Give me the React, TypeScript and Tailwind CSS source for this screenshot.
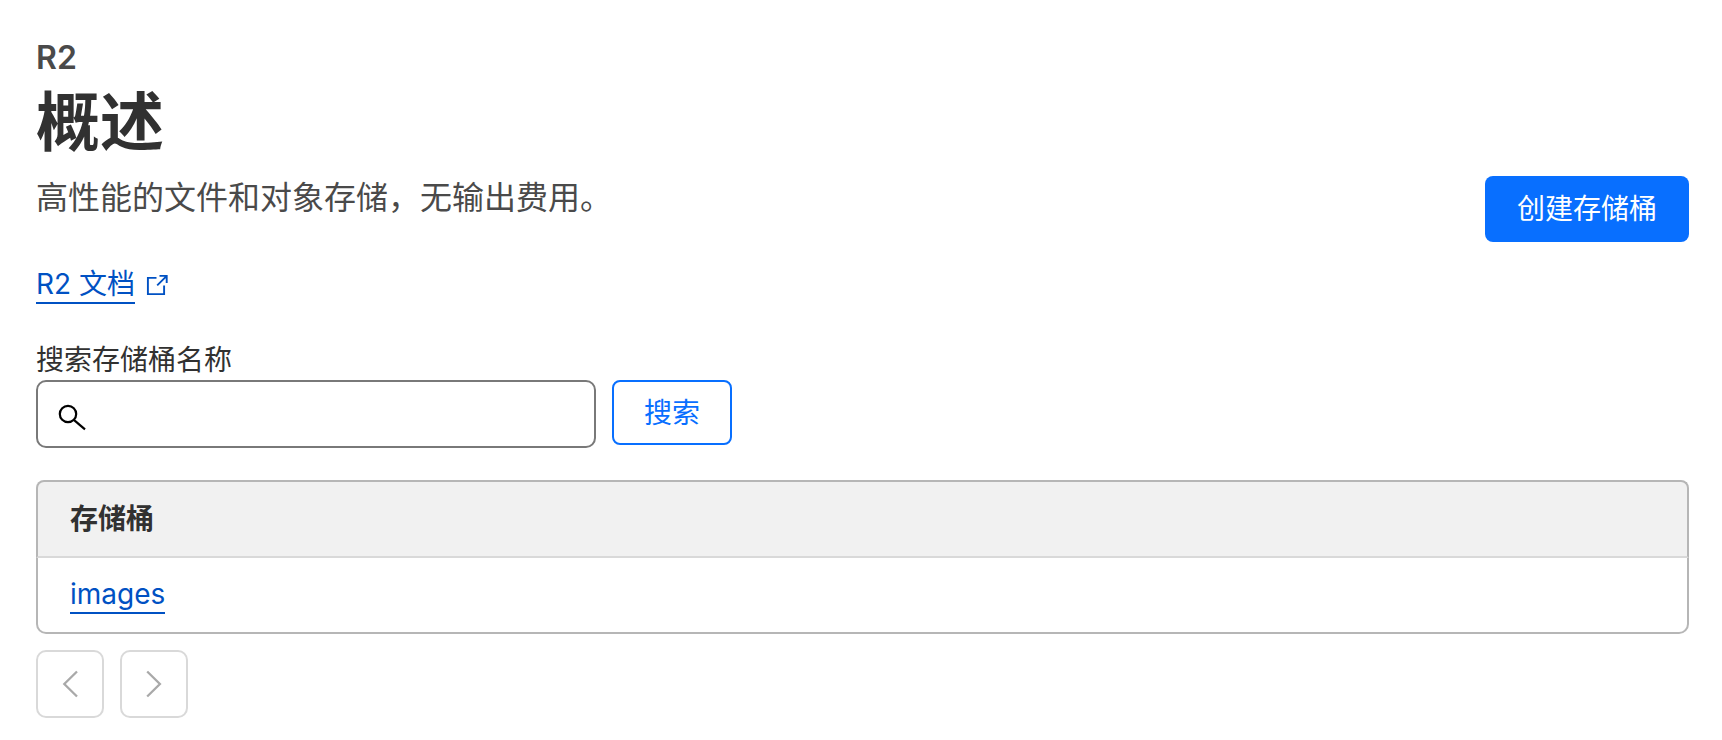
import { useState } from 'react'

const buckets = ['images']

function ExternalIcon() {
  return (
    <svg width="22" height="22" viewBox="0 0 22 22" fill="none" stroke="currentColor" strokeWidth="1.9" aria-hidden="true">
      <path d="M10.5 3.9H1.9v16.2h16.2v-8.6" />
      <path d="M13.5 1.9h7.2V9M20.5 2.1 11.2 11.4" />
    </svg>
  )
}

function SearchIcon() {
  return (
    <svg width="28" height="28" viewBox="0 0 28 28" fill="none" stroke="currentColor" strokeWidth="2.2" aria-hidden="true">
      <circle cx="10" cy="10" r="8.2" />
      <path d="M15.8 15.8 27 25.4" />
    </svg>
  )
}

function PageButton({ label, path }: { label: string; path: string }) {
  return (
    <button
      type="button"
      disabled
      aria-label={label}
      className="flex size-17 items-center justify-center rounded-[10px] border-2 border-[#d9d9d9] text-[#a9a9a9]"
    >
      <svg width="28" height="28" viewBox="0 0 28 28" fill="none" stroke="currentColor" strokeWidth="2.3" aria-hidden="true">
        <path d={path} />
      </svg>
    </button>
  )
}

export default function App() {
  const [query, setQuery] = useState('')

  return (
    <main className="bg-white pt-[38px] pr-[33px] pb-5 pl-9 font-[Inter,'Noto_Sans_CJK_SC',sans-serif] text-[28px] leading-10 text-[#313131]">
      <header className="flex items-end justify-between">
        <div>
          <p className="text-[32px] font-semibold text-[#4a4a4a]">R2</p>
          <h1 className="mt-1 text-[64px] leading-[80px] font-semibold">概述</h1>
          <p className="mt-3 text-[32px] leading-12 text-[#4a4a4a]">高性能的文件和对象存储，无输出费用。</p>
        </div>
        <button type="button" className="-mb-5 h-[66px] rounded-lg bg-[#086fff] px-8 text-white">
          创建存储桶
        </button>
      </header>

      <p className="mt-11 flex items-center gap-[11px] text-[#0051c3]">
        <a href="#docs" className="border-b-2 border-[#0051c3] leading-9">
          R2 文档
        </a>
        <ExternalIcon />
      </p>

      <form className="mt-9" onSubmit={(e) => e.preventDefault()}>
        <label htmlFor="bucket-search" className="block">
          搜索存储桶名称
        </label>
        <div className="flex items-start gap-4">
          <div className="relative w-[560px]">
            <span className="absolute top-6 left-[22px] text-black">
              <SearchIcon />
            </span>
            <input
              id="bucket-search"
              type="text"
              value={query}
              onChange={(e) => setQuery(e.target.value)}
              className="block h-17 w-full rounded-[10px] border-2 border-[#797979] pr-4 pl-16"
            />
          </div>
          <button type="submit" className="h-[65px] rounded-lg border-2 border-[#086fff] px-[30px] text-[#086fff]">
            搜索
          </button>
        </div>
      </form>

      <table className="mt-8 w-full border-separate border-spacing-0 text-left">
        <thead>
          <tr>
            <th className="rounded-t-lg border-2 border-[#b6b6b6] border-b-[#d9d9d9] bg-[#f1f1f1] px-[32px] py-[17px] font-semibold">
              存储桶
            </th>
          </tr>
        </thead>
        <tbody>
          {buckets.map((name) => (
            <tr key={name}>
              <td className="rounded-b-[10px] border-2 border-t-0 border-[#b6b6b6] px-[32px] py-[18px]">
                <a href={`#${name}`} className="block w-fit border-b-2 border-[#0051c3] leading-9 text-[#0051c3]">
                  {name}
                </a>
              </td>
            </tr>
          ))}
        </tbody>
      </table>

      <nav aria-label="分页" className="mt-4 flex gap-4">
        <PageButton label="上一页" path="M21 1.5 8.3 14 21 26.5" />
        <PageButton label="下一页" path="M7.2 1.5 19.9 14 7.2 26.5" />
      </nav>
    </main>
  )
}
